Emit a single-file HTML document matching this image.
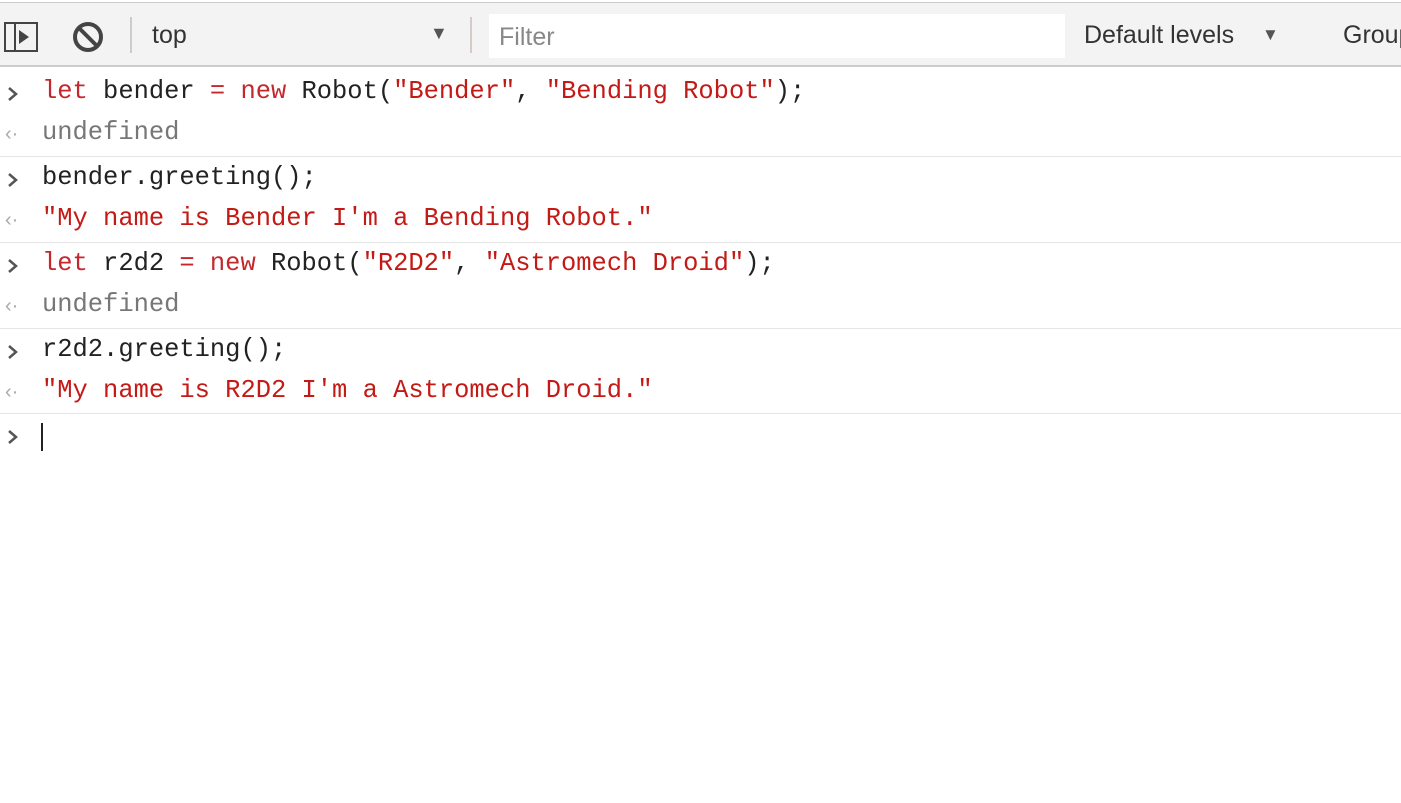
<!DOCTYPE html>
<html><head><style>
body{margin:0;width:1401px;height:803px;background:#fff;overflow:hidden;font-family:"Liberation Sans",sans-serif;position:relative}
.tb{position:absolute;left:0;top:2px;width:1401px;height:62px;background:#f3f3f3;border-top:1px solid #ccc;border-bottom:2px solid #ccc}
.t{position:absolute;font-size:25px;color:#333}
.row{position:absolute;left:0;width:1401px;font-family:"Liberation Mono",monospace;font-size:25.45px;color:#222;white-space:pre}
.sep{position:absolute;left:0;width:1401px;height:1px;background:#e6e6e6}
.r{color:#c41a16}.k{color:#c4282c}.g{color:#777}
.p{position:absolute;left:6px}
.q{position:absolute;left:5px;color:#aaa;font-size:20px}
</style></head><body>
<div class="tb">
<svg style="position:absolute;left:4px;top:19px" width="34" height="30"><rect x="1" y="1" width="32" height="28" fill="none" stroke="#444" stroke-width="2"/><line x1="11" y1="1" x2="11" y2="29" stroke="#444" stroke-width="2"/><path d="M15 8 L25 15 L15 22Z" fill="#444"/></svg>
<svg style="position:absolute;left:72px;top:18px" width="32" height="32"><circle cx="16" cy="16" r="13" fill="none" stroke="#444" stroke-width="4"/><line x1="7" y1="7" x2="25" y2="25" stroke="#444" stroke-width="4"/></svg>
<div style="position:absolute;left:130px;top:14px;width:2px;height:36px;background:#ccc"></div>
<div class="t" style="left:152px;top:18px">top</div>
<div class="t" style="left:430px;top:20px;font-size:18px;color:#555">▼</div>
<div style="position:absolute;left:470px;top:14px;width:2px;height:36px;background:#d8c8c8"></div>
<div style="position:absolute;left:489px;top:11px;width:576px;height:44px;background:#fff"></div>
<div class="t" style="left:499px;top:20px;color:#888">Filter</div>
<div class="t" style="left:1084px;top:18px">Default levels</div>
<div class="t" style="left:1262px;top:22px;font-size:17px;color:#555">▼</div>
<div class="t" style="left:1343px;top:18px">Group</div>
</div>
<div class="row" style="left:42px;top:77px"><span class="k">let</span> bender <span class="k">=</span> <span class="k">new</span> Robot(<span class="r">"Bender"</span>, <span class="r">"Bending Robot"</span>);</div>
<svg class="p" style="top:86px" width="14" height="16"><path d="M3 2 L10 8 L3 14" fill="none" stroke="#555" stroke-width="2.5"/></svg>
<div class="row g" style="left:42px;top:118px">undefined</div>
<div class="q" style="top:123px">‹·</div>
<div class="sep" style="top:156px"></div>
<div class="row" style="left:42px;top:163px">bender.greeting();</div>
<svg class="p" style="top:172px" width="14" height="16"><path d="M3 2 L10 8 L3 14" fill="none" stroke="#555" stroke-width="2.5"/></svg>
<div class="row r" style="left:42px;top:204px">"My name is Bender I'm a Bending Robot."</div>
<div class="q" style="top:209px">‹·</div>
<div class="sep" style="top:242px"></div>
<div class="row" style="left:42px;top:249px"><span class="k">let</span> r2d2 <span class="k">=</span> <span class="k">new</span> Robot(<span class="r">"R2D2"</span>, <span class="r">"Astromech Droid"</span>);</div>
<svg class="p" style="top:258px" width="14" height="16"><path d="M3 2 L10 8 L3 14" fill="none" stroke="#555" stroke-width="2.5"/></svg>
<div class="row g" style="left:42px;top:290px">undefined</div>
<div class="q" style="top:295px">‹·</div>
<div class="sep" style="top:328px"></div>
<div class="row" style="left:42px;top:335px">r2d2.greeting();</div>
<svg class="p" style="top:344px" width="14" height="16"><path d="M3 2 L10 8 L3 14" fill="none" stroke="#555" stroke-width="2.5"/></svg>
<div class="row r" style="left:42px;top:376px">"My name is R2D2 I'm a Astromech Droid."</div>
<div class="q" style="top:381px">‹·</div>
<div class="sep" style="top:413px"></div>
<svg class="p" style="top:429px" width="14" height="16"><path d="M3 2 L10 8 L3 14" fill="none" stroke="#555" stroke-width="2.5"/></svg>
<div style="position:absolute;left:41px;top:423px;width:2px;height:28px;background:#222"></div>
</body></html>
